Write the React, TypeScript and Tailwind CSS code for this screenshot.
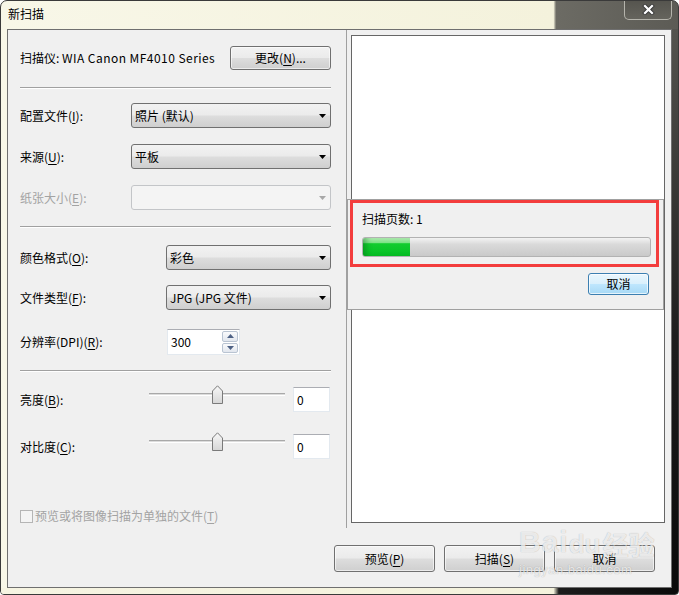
import React from "react";

const FONT = "font-['Noto_Sans_CJK_SC','Noto_Sans',sans-serif]";

function Arrow({ disabled }: { disabled?: boolean }) {
  return (
    <svg width="7" height="4" viewBox="0 0 7 4" className="shrink-0">
      <path d="M0 0 L7 0 L3.5 4 Z" fill={disabled ? "#a8a8a8" : "#000"} />
    </svg>
  );
}

function Combo({ value, w, disabled }: { value: string; w: string; disabled?: boolean }) {
  if (disabled) {
    return (
      <div className={`${w} h-[25px] rounded-[3px] border border-[#c3c5c8] bg-[#f4f4f4] flex items-center justify-end pr-[4px]`}>
        <Arrow disabled />
      </div>
    );
  }
  return (
    <div
      className={`${w} h-[25px] rounded-[3px] border border-[#707070] bg-[linear-gradient(to_bottom,#f2f2f2_0%,#ebebeb_48%,#dddddd_52%,#cfcfcf_100%)] flex items-center justify-between pl-[3px] pr-[4px] text-[12px] leading-[16px] text-black`}
    >
      <span className="whitespace-pre">{value}</span>
      <Arrow />
    </div>
  );
}

function Btn({ children, w, h, focused }: { children: React.ReactNode; w: string; h: string; focused?: boolean }) {
  return (
    <div
      className={`${w} ${h} rounded-[3px] border ${
        focused
          ? "border-[#3c7fb1] bg-[linear-gradient(to_bottom,#eaf6fd_0%,#d9f0fc_48%,#bee6fd_52%,#a7d9f5_100%)] shadow-[inset_0_0_0_1px_rgba(255,255,255,0.7)]"
          : "border-[#707070] bg-[linear-gradient(to_bottom,#f2f2f2_0%,#ebebeb_48%,#dddddd_52%,#cfcfcf_100%)] shadow-[inset_0_0_0_1px_rgba(255,255,255,0.6)]"
      } flex items-center justify-center text-[12px] leading-[16px] text-black`}
    >
      {children}
    </div>
  );
}

function U({ children }: { children: React.ReactNode }) {
  return <span className="underline underline-offset-[2px] decoration-[1px]">{children}</span>;
}

function TextBox({ value, w }: { value: string; w: string }) {
  return (
    <div
      className={`${w} h-[25px] bg-white border border-[#e3e9ef] border-t-[#abadb3] flex items-center pl-[3px] text-[12px] leading-[16px] text-black`}
    >
      {value}
    </div>
  );
}

function Slider({ id }: { id: string }) {
  return (
    <div className="relative h-[25px] w-[136px]">
      <div className="absolute left-0 right-0 top-[6px] h-[3px] border-t border-[#a9a9a9] border-b border-b-white bg-[#dcdcdc]" />
      <svg className="absolute left-[63px] top-[-2px]" width="11" height="19" viewBox="0 0 11 19">
        <defs>
          <linearGradient id={id} x1="0" y1="0" x2="0" y2="1">
            <stop offset="0" stopColor="#f8f8f8" />
            <stop offset="1" stopColor="#d6d6d6" />
          </linearGradient>
        </defs>
        <path d="M0.5 6 L5.5 0.8 L10.5 6 L10.5 18.5 L0.5 18.5 Z" fill={`url(#${id})`} stroke="#7a7a7a" strokeWidth="1" />
      </svg>
    </div>
  );
}

function Sep() {
  return <div className="h-[2px] border-t border-[#a0a0a0] border-b border-b-white" />;
}

export default function App() {
  return (
    <div
      className={`${FONT} relative w-[679px] h-[595px] flex flex-col rounded-t-[7px] rounded-b-[4px] border border-[#3a3a3a] overflow-hidden bg-[linear-gradient(to_right,#f8f7e8_0%,#f4f2dc_81.6%,#6c6b64_82%,#5c5b55_100%)]`}
    >
      {/* Title bar */}
      <div className="h-[28px] flex items-start shrink-0">
        <div className="pl-[7px] pt-[5px] text-[12px] leading-[16px] text-black">新扫描</div>
        <div className="ml-auto mr-[6px] mt-[-1px] w-[48px] h-[20px] rounded-b-[5px] border border-t-0 border-[#b5b4ac] bg-[linear-gradient(to_bottom,#55544e,#65645d)] flex items-center justify-center">
          <svg width="13" height="11" viewBox="0 0 13 11">
            <path d="M3 2 L10 9 M10 2 L3 9" stroke="#3a3a3a" strokeWidth="4" strokeLinecap="square" />
            <path d="M3 2 L10 9 M10 2 L3 9" stroke="#ffffff" strokeWidth="2.2" strokeLinecap="square" />
          </svg>
        </div>
      </div>

      {/* Middle */}
      <div className="flex h-[559px] shrink-0">
        <div className="w-[6px]" />
        <div className="w-[665px] h-[559px] border border-[#6f6f6f] bg-[#f0f0f0] flex flex-col">
          <div className="flex h-[498px]">
            {/* Left form */}
            <div className="w-[338px] pl-[12px] pr-[15px] flex flex-col text-[12px] leading-[16px] text-black">
              <div className="mt-[16px] h-[24px] flex items-center justify-between">
                <span>
                  扫描仪: <span className="tracking-[0.45px]">WIA Canon MF4010 Series</span>
                </span>
                <Btn w="w-[101px]" h="h-[24px]">
                  更改(<U>N</U>)...
                </Btn>
              </div>
              <div className="mt-[17px]">
                <Sep />
              </div>
              <div className="mt-[14px] h-[25px] flex items-center justify-between">
                <span>
                  配置文件(<U>I</U>):
                </span>
                <Combo value="照片 (默认)" w="w-[200px]" />
              </div>
              <div className="mt-[16px] h-[25px] flex items-center justify-between">
                <span>
                  来源(<U>U</U>):
                </span>
                <Combo value="平板" w="w-[200px]" />
              </div>
              <div className="mt-[16px] h-[25px] flex items-center justify-between">
                <span className="text-[#a3a3a3]">
                  纸张大小(<U>E</U>):
                </span>
                <Combo value="" w="w-[200px]" disabled />
              </div>
              <div className="mt-[16px]">
                <Sep />
              </div>
              <div className="mt-[17px] h-[25px] flex items-center justify-between">
                <span>
                  颜色格式(<U>O</U>):
                </span>
                <Combo value="彩色" w="w-[165px]" />
              </div>
              <div className="mt-[15px] h-[25px] flex items-center justify-between">
                <span>
                  文件类型(<U>F</U>):
                </span>
                <Combo value="JPG (JPG 文件)" w="w-[165px]" />
              </div>
              <div className="mt-[19px] h-[26px] flex items-center">
                <span className="w-[147px]">
                  分辨率(DPI)(<U>R</U>):
                </span>
                <div className="w-[73px] h-[26px] flex bg-white border border-[#e3e9ef] border-t-[#abadb3]">
                  <div className="flex-1 flex items-center pl-[3px]">300</div>
                  <div className="w-[17px] flex flex-col gap-[1px] py-[1px] pr-[1px]">
                    <div className="flex-1 rounded-[2px] border border-[#b9c4d2] bg-[linear-gradient(to_bottom,#fafbfc,#e1e6ee)] flex items-center justify-center">
                      <svg width="7" height="4" viewBox="0 0 7 4">
                        <path d="M0 4 L7 4 L3.5 0 Z" fill="#4d6185" />
                      </svg>
                    </div>
                    <div className="flex-1 rounded-[2px] border border-[#b9c4d2] bg-[linear-gradient(to_bottom,#fafbfc,#e1e6ee)] flex items-center justify-center">
                      <svg width="7" height="4" viewBox="0 0 7 4">
                        <path d="M0 0 L7 0 L3.5 4 Z" fill="#4d6185" />
                      </svg>
                    </div>
                  </div>
                </div>
              </div>
              <div className="mt-[15px]">
                <Sep />
              </div>
              <div className="mt-[15px] h-[25px] flex items-center">
                <span className="w-[129px]">
                  亮度(<U>B</U>):
                </span>
                <Slider id="s1" />
                <div className="ml-[8px]">
                  <TextBox value="0" w="w-[37px]" />
                </div>
              </div>
              <div className="mt-[22px] h-[25px] flex items-center">
                <span className="w-[129px]">
                  对比度(<U>C</U>):
                </span>
                <Slider id="s2" />
                <div className="ml-[8px]">
                  <TextBox value="0" w="w-[37px]" />
                </div>
              </div>
              <div className="mt-[50px] h-[14px] flex items-center gap-[2px] text-[#a3a3a3]">
                <div className="w-[13px] h-[13px] border border-[#b5b5b5] bg-[#f4f4f4]" />
                <span>
                  预览或将图像扫描为单独的文件(<U>T</U>)
                </span>
              </div>
            </div>

            {/* Preview */}
            <div className="relative w-[325px] border-l border-[#a0a0a0] pl-[4px] pt-[5px]">
              <div className="w-[314px] h-[488px] border border-[#666666] bg-white" />
              {/* progress dialog */}
              <div className="absolute left-0 top-[169px] w-[317px] h-[111px] border border-[#a0a0a0] bg-[#f0f0f0] flex flex-col px-[14px] text-[12px] leading-[16px] text-black">
                <div className="mt-[11px] h-[16px]">扫描页数: 1</div>
                <div className="mt-[10px] w-[289px] h-[20px] rounded-[3px] border border-[#b2b2b2] bg-[linear-gradient(to_bottom,#f3f3f3_0%,#dadada_35%,#c9c9c9_100%)] overflow-hidden">
                  <div className="w-[47px] h-full bg-[linear-gradient(to_bottom,#b8f0b8_0%,#7fe387_25%,#12cc2e_32%,#06c024_100%)] shadow-[inset_6px_0_6px_-3px_rgba(0,100,20,0.45)]" />
                </div>
                <div className="mt-[16px] flex justify-end">
                  <Btn w="w-[61px]" h="h-[22px]" focused>
                    取消
                  </Btn>
                </div>
                <div className="absolute left-[2px] top-0 w-[309px] h-[67px] border-[3px] border-[#f33d3d]" />
              </div>
            </div>
          </div>

          {/* Bottom buttons */}
          <div className="pt-[17px] pr-[16px] flex justify-end gap-[9px]">
            <Btn w="w-[101px]" h="h-[27px]">
              预览(<U>P</U>)
            </Btn>
            <Btn w="w-[101px]" h="h-[27px]">
              扫描(<U>S</U>)
            </Btn>
            <Btn w="w-[101px]" h="h-[27px]">
              取消
            </Btn>
          </div>
        </div>
        <div className="w-[6px] bg-[linear-gradient(to_bottom,#55544f,#1e1e1e_55%,#0a0a0a)]" />
      </div>

      {/* Bottom frame */}
      <div className="flex-1 bg-[linear-gradient(to_right,#f6f4e2_0%,#f4f2dc_81.6%,#1c1c1c_82.4%,#0a0a0a_100%)]" />

      {/* Watermark */}
      <div className="absolute left-[518px] top-[526px] flex flex-col items-start pointer-events-none font-['Liberation_Sans',sans-serif] text-white/75 [text-shadow:0_0_1px_rgba(0,0,0,0.3)]">
        <div className="flex items-end leading-none">
          <span className="text-[30px] font-bold tracking-[1px]">Bai</span>
          <span className="text-[26px] font-bold">du</span>
          <span className={`${FONT} text-[26px] font-bold ml-[2px]`}>经验</span>
        </div>
        <div className="mt-[6px] text-[13px] leading-none tracking-[0.5px]">jingyan.baidu.com</div>
      </div>
    </div>
  );
}
